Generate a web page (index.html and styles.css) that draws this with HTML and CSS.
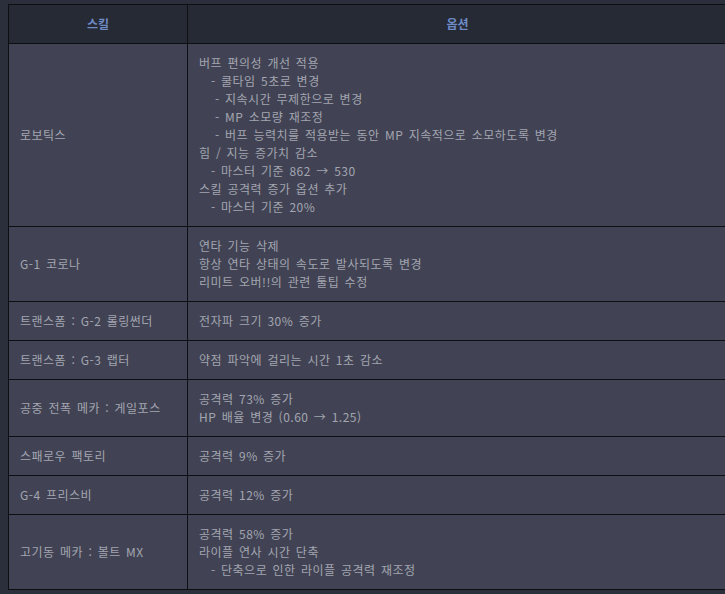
FILE: index.html
```html
<!DOCTYPE html>
<html lang="ko">
<head>
<meta charset="utf-8">
<link rel="stylesheet" href="styles.css">
</head>
<body>
<table class="skills">
  <thead>
    <tr><th class="c1">스킬</th><th class="c2">옵션</th></tr>
  </thead>
  <tbody>
    <tr>
      <td>로보틱스</td>
      <td>
        <div>버프 편의성 개선 적용</div>
        <div class="i1">- 쿨타임 5초로 변경</div>
        <div class="i2">- 지속시간 무제한으로 변경</div>
        <div class="i2">- MP 소모량 재조정</div>
        <div class="i2">- 버프 능력치를 적용받는 동안 MP 지속적으로 소모하도록 변경</div>
        <div>힘 / 지능 증가치 감소</div>
        <div class="i1">- 마스터 기준 862 → 530</div>
        <div>스킬 공격력 증가 옵션 추가</div>
        <div class="i1">- 마스터 기준 20%</div>
      </td>
    </tr>
    <tr>
      <td>G-1 코로나</td>
      <td>
        <div>연타 기능 삭제</div>
        <div>항상 연타 상태의 속도로 발사되도록 변경</div>
        <div>리미트 오버!!의 관련 툴팁 수정</div>
      </td>
    </tr>
    <tr>
      <td>트랜스폼 : G-2 롤링썬더</td>
      <td><div>전자파 크기 30% 증가</div></td>
    </tr>
    <tr>
      <td>트랜스폼 : G-3 랩터</td>
      <td><div>약점 파악에 걸리는 시간 1초 감소</div></td>
    </tr>
    <tr>
      <td>공중 전폭 메카 : 게일포스</td>
      <td>
        <div>공격력 73% 증가</div>
        <div>HP 배율 변경 (0.60 → 1.25)</div>
      </td>
    </tr>
    <tr>
      <td>스패로우 팩토리</td>
      <td><div>공격력 9% 증가</div></td>
    </tr>
    <tr>
      <td>G-4 프리스비</td>
      <td><div>공격력 12% 증가</div></td>
    </tr>
    <tr>
      <td>고기동 메카 : 볼트 MX</td>
      <td>
        <div>공격력 58% 증가</div>
        <div>라이플 연사 시간 단축</div>
        <div class="i1">- 단축으로 인한 라이플 공격력 재조정</div>
      </td>
    </tr>
  </tbody>
</table>
</body>
</html>
```

FILE: styles.css
```css
html, body {
  margin: 0;
  padding: 0;
  background: #2b2e3b;
}
body {
  padding: 4px 0 0 8px;
  font-family: "Noto Sans CJK KR", "Noto Sans", sans-serif;
  font-size: 12px;
  color: #a3a5b0;
  overflow: hidden;
}
.skills {
  border-collapse: collapse;
  width: 720px;
  table-layout: fixed;
}
.skills th, .skills td {
  border: 1px solid #0e0f13;
  line-height: 18px;
  padding: 10px 0 10px 11px;
  text-align: left;
  vertical-align: middle;
}
.skills th {
  background: #262a35;
  color: #6f8bc6;
  font-weight: bold;
  text-align: center;
  padding: 10px 0;
}
.skills td {
  background: #414354;
  letter-spacing: 0.5px;
  word-spacing: 1.5px;
}
.c1 { width: 178px; }
.skills td:first-child { padding-left: 11px; }
.i1 { padding-left: 12px; }
.i2 { padding-left: 16px; }
```
